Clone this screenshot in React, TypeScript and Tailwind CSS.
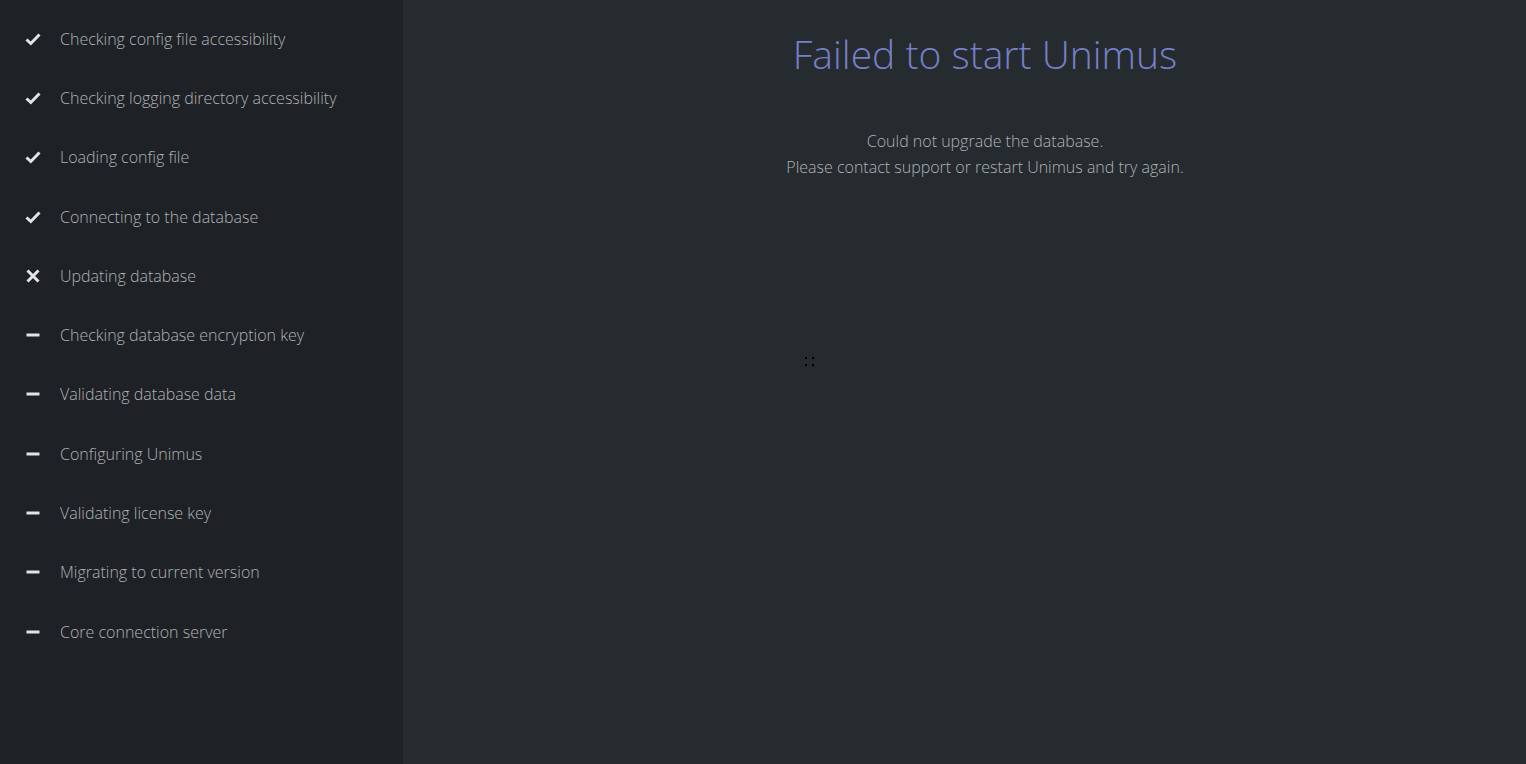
const steps: { label: string; state: "ok" | "fail" | "pending" }[] = [
  { label: "Checking config file accessibility", state: "ok" },
  { label: "Checking logging directory accessibility", state: "ok" },
  { label: "Loading config file", state: "ok" },
  { label: "Connecting to the database", state: "ok" },
  { label: "Updating database", state: "fail" },
  { label: "Checking database encryption key", state: "pending" },
  { label: "Validating database data", state: "pending" },
  { label: "Configuring Unimus", state: "pending" },
  { label: "Validating license key", state: "pending" },
  { label: "Migrating to current version", state: "pending" },
  { label: "Core connection server", state: "pending" },
];

function StepIcon({ state }: { state: "ok" | "fail" | "pending" }) {
  if (state === "ok")
    return (
      <svg width="18" height="18" viewBox="0 0 18 18">
        <path d="M2.5 9.5 L6.8 13.5 L15.5 4.5" fill="none" stroke="#e3e4e5" strokeWidth="3" />
      </svg>
    );
  if (state === "fail")
    return (
      <svg width="18" height="18" viewBox="0 0 18 18">
        <path d="M3.5 3.5 L14.5 14.5 M14.5 3.5 L3.5 14.5" fill="none" stroke="#e3e4e5" strokeWidth="3" />
      </svg>
    );
  return (
    <svg width="18" height="18" viewBox="0 0 18 18">
      <path d="M2.5 9 L15.5 9" fill="none" stroke="#e3e4e5" strokeWidth="3" />
    </svg>
  );
}

export default function App() {
  return (
    <div
      className="flex h-[764px] w-full overflow-hidden font-light"
      style={{ fontFamily: '"Open Sans", sans-serif' }}
    >
      <aside className="flex w-[403px] shrink-0 flex-col bg-[#1e2226] pt-[9px]">
        {steps.map((s) => (
          <div key={s.label} className="flex h-[59.3px] items-center">
            <div className="flex w-[60px] justify-center pr-[3px] pl-[8px]">
              <StepIcon state={s.state} />
            </div>
            <span className="text-[16px] text-[#afb2b5]">{s.label}</span>
          </div>
        ))}
      </aside>
      <main className="relative flex flex-1 flex-col items-center bg-[#262b30] pl-[41px] pt-[27px]">
        <h1 className="text-[39px] leading-[54px] text-[#7480c8]">Failed to start Unimus</h1>
        <div className="mt-[47px] text-center text-[16px] leading-[26px] text-[#afb2b5]">
          <p>Could not upgrade the database.</p>
          <p>Please contact support or restart Unimus and try again.</p>
        </div>
        <div className="absolute left-[402px] top-[357px] grid grid-cols-2 gap-x-[5px] gap-y-[5px]">
          <span className="h-[2px] w-[2px] bg-black" />
          <span className="h-[2px] w-[2px] bg-black" />
          <span className="h-[2px] w-[2px] bg-black" />
          <span className="h-[2px] w-[2px] bg-black" />
        </div>
      </main>
    </div>
  );
}
